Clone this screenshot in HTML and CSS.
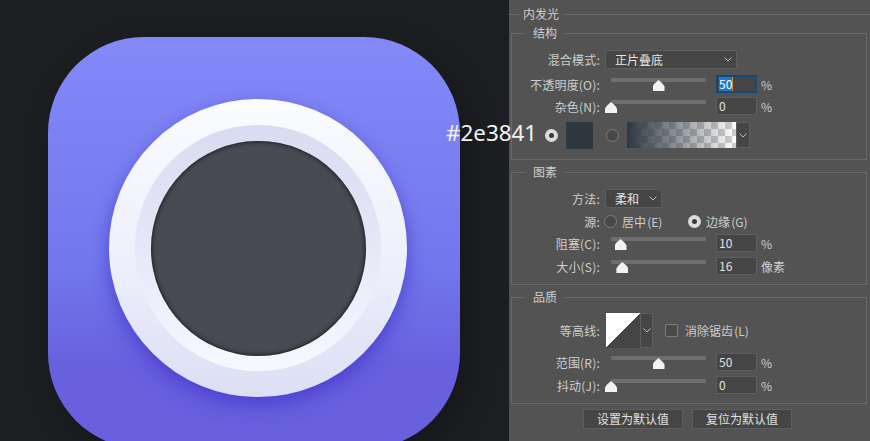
FILE: index.html
```html
<!DOCTYPE html>
<html lang="zh-CN">
<head>
  <meta charset="UTF-8">
  <title>内发光</title>
  <link rel="stylesheet" href="styles.css">
</head>
<body>
  <div class="art">
    <div class="icon">
      <div class="ring">
        <div class="ring-inner">
          <div class="hole"></div>
        </div>
      </div>
    </div>
  </div>

  <div class="panel">
    <div class="heading"><span>内发光</span></div>

    <div class="group">
      <div class="legend">结构</div>
      <div class="row">
        <div class="label">混合模式:</div>
        <div class="select select-wide">正片叠底
          <svg class="chevron" viewBox="0 0 8 5"><path d="M0.5 0.5 4 4 7.5 0.5"/></svg>
        </div>
      </div>
      <div class="row mt6">
        <div class="label">不透明度(O):</div>
        <div class="track"><i class="thumb" style="left:50%"></i></div>
        <div class="value active"><span class="selected">50</span><span class="caret"></span></div>
        <div class="unit">%</div>
      </div>
      <div class="row mt4">
        <div class="label">杂色(N):</div>
        <div class="track"><i class="thumb" style="left:0"></i></div>
        <div class="value">0</div>
        <div class="unit">%</div>
      </div>
      <div class="row colors">
        <i class="radio on"></i>
        <div class="swatch"></div>
        <i class="radio"></i>
        <div class="ramp"></div>
        <div class="drop drop-ramp">
          <svg class="chevron" viewBox="0 0 8 5"><path d="M0.5 0.5 4 4 7.5 0.5"/></svg>
        </div>
      </div>
    </div>

    <div class="group mt12">
      <div class="legend">图素</div>
      <div class="row">
        <div class="label">方法:</div>
        <div class="select select-small">柔和
          <svg class="chevron" viewBox="0 0 8 5"><path d="M0.5 0.5 4 4 7.5 0.5"/></svg>
        </div>
      </div>
      <div class="row mt4">
        <div class="label">源:</div>
        <div class="source first"><i class="radio"></i>居中 (E)</div>
        <div class="source"><i class="radio on"></i>边缘 (G)</div>
      </div>
      <div class="row mt4">
        <div class="label">阻塞(C):</div>
        <div class="track"><i class="thumb" style="left:10%"></i></div>
        <div class="value">10</div>
        <div class="unit">%</div>
      </div>
      <div class="row mt5">
        <div class="label">大小(S):</div>
        <div class="track"><i class="thumb" style="left:12%"></i></div>
        <div class="value">16</div>
        <div class="unit">像素</div>
      </div>
    </div>

    <div class="group mt12 quality">
      <div class="legend">品质</div>
      <div class="row">
        <div class="label">等高线:</div>
        <div class="contour"></div>
        <div class="drop drop-contour">
          <svg class="chevron" viewBox="0 0 8 5"><path d="M0.5 0.5 4 4 7.5 0.5"/></svg>
        </div>
        <i class="check"></i>
        <div class="check-text">消除锯齿 (L)</div>
      </div>
      <div class="row mt5">
        <div class="label">范围(R):</div>
        <div class="track"><i class="thumb" style="left:50%"></i></div>
        <div class="value">50</div>
        <div class="unit">%</div>
      </div>
      <div class="row mt5">
        <div class="label">抖动(J):</div>
        <div class="track"><i class="thumb" style="left:0"></i></div>
        <div class="value">0</div>
        <div class="unit">%</div>
      </div>
    </div>

    <div class="buttons">
      <button>设置为默认值</button>
      <button>复位为默认值</button>
    </div>
  </div>

  <div class="hex">#2e3841</div>
</body>
</html>
```

FILE: styles.css
```css
html, body {
  margin: 0;
  height: 100%;
}
body {
  display: flex;
  width: 870px;
  height: 441px;
  overflow: hidden;
  position: relative;
  font-family: "Noto Sans CJK SC", "Noto Sans", sans-serif;
  font-size: 12px;
  color: #cdcdcd;
}

/* artwork */
.art {
  width: 509px;
  height: 441px;
  box-sizing: border-box;
  padding: 37px 0 0 48px;
  background: #1d1e22;
  overflow: hidden;
  flex: none;
}
.icon {
  width: 412px;
  height: 412px;
  box-sizing: border-box;
  padding: 62px 0 0 61px;
  border-radius: 96px;
  background: linear-gradient(#8489f8, #7278ec 55%, #6860de 80%, #6860de);
  box-shadow: 8px 10px 30px rgba(0,0,0,0.25);
}
.ring {
  width: 298px;
  height: 298px;
  border-radius: 50%;
  display: flex;
  align-items: center;
  justify-content: center;
  background: linear-gradient(#fbfcff, #eceefb 60%, #dcdef4);
  box-shadow: 0 8px 18px rgba(70,60,205,0.85);
}
.ring-inner {
  width: 246px;
  height: 246px;
  border-radius: 50%;
  display: flex;
  align-items: center;
  justify-content: center;
  background: linear-gradient(#d9dbf0, #e6e8f8 50%, #f7f8ff);
}
.hole {
  width: 215px;
  height: 215px;
  border-radius: 50%;
  background: #4a4a53;
  box-shadow: inset 0 0 5px rgba(0,0,0,0.85);
}

/* panel */
.panel {
  flex: 1;
  background: #535353;
}
.heading {
  height: 29px;
  display: flex;
  align-items: center;
  gap: 4px;
  line-height: 27px;
}
.heading span {
  height: 27px;
  margin-top: -2px;
}
.heading::before, .heading::after {
  content: "";
  height: 1px;
  background: #696969;
}
.heading::before {
  width: 10px;
}
.heading::after {
  flex: 1;
}
.group {
  position: relative;
  margin: 4px 3px 0 2px;
  padding: 16px 0 10px;
  border: 1px solid #696969;
}
.mt12 {
  margin-top: 12px;
}
.group.mt12 {
  padding-bottom: 9px;
}
.group.quality {
  padding-top: 15px;
}
.legend {
  position: absolute;
  top: -10px;
  left: 13px;
  padding: 0 8px;
  line-height: 17px;
  background: #535353;
}
.row {
  display: flex;
  align-items: center;
}
.mt4 { margin-top: 4px; }
.mt5 { margin-top: 5px; }
.mt6 { margin-top: 6px; }

.label {
  width: 88px;
  flex: none;
  text-align: right;
  white-space: nowrap;
  letter-spacing: 0.2px;
}
.select {
  height: 19px;
  box-sizing: border-box;
  margin-left: 5px;
  padding-left: 9px;
  display: flex;
  align-items: center;
  justify-content: space-between;
  background: #454545;
  border: 1px solid #5e5e5e;
  border-radius: 2px;
  color: #e6e6e6;
  line-height: 17px;
}
.select-wide { width: 132px; }
.select-small { width: 57px; }
.chevron {
  width: 8px;
  height: 5px;
  margin-right: 4px;
  fill: none;
  stroke: #bdbdbd;
  stroke-width: 1;
}

/* sliders */
.track {
  position: relative;
  width: 95px;
  height: 4px;
  margin: 3px 10px 11px 11px;
  background: #6e6e6e;
  border-radius: 1px;
}
.thumb {
  position: absolute;
  top: 2px;
  width: 12px;
  height: 11px;
  margin-left: -6px;
  background: #f2f2f2;
  clip-path: polygon(50% 0, 85% 35%, 100% 60%, 100% 100%, 0 100%, 0 60%, 15% 35%);
}
.value {
  width: 41px;
  height: 18px;
  box-sizing: border-box;
  padding-left: 2px;
  background: #454545;
  border: 1px solid #5e5e5e;
  color: #e0e0e0;
  line-height: 16px;
  display: flex;
}
.value.active {
  border: 2px solid #0f4a80;
  padding-left: 1px;
  line-height: 14px;
}
.selected {
  background: #2277cc;
  color: #fff;
}
.caret {
  width: 1px;
  background: #d98a2b;
}
.unit {
  margin-left: 4px;
}

/* colour row */
.colors {
  margin-top: 7px;
  padding-left: 33px;
}
.radio {
  display: block;
  flex: none;
  width: 13px;
  height: 13px;
  box-sizing: border-box;
  border: 1px solid #7d7d7d;
  border-radius: 50%;
  background: #484848;
}
.radio.on {
  border: 4px solid #dcdcdc;
  background: #3a3a3a;
}
.swatch {
  width: 27px;
  height: 27px;
  margin: 0 13px 0 8px;
  background: #2e3841;
}
.ramp {
  width: 109px;
  height: 26px;
  margin-left: 8px;
  margin-bottom: 1px;
  background:
    linear-gradient(to right, #2e3841, rgba(46,56,65,0)),
    conic-gradient(#fff 25%, #cfcfcf 0 50%, #fff 0 75%, #cfcfcf 0) 0 0 / 14px 14px;
}
.drop {
  box-sizing: border-box;
  display: flex;
  align-items: center;
  justify-content: center;
  background: #454545;
  border: 1px solid #5e5e5e;
}
.drop .chevron {
  margin: 0;
}
.drop-ramp {
  width: 14px;
  height: 26px;
  margin-bottom: 1px;
}
.contour {
  width: 34px;
  height: 35px;
  margin-left: 6px;
  background: linear-gradient(to bottom right, #fff 50%, #454545 50%);
}
.drop-contour {
  width: 13px;
  height: 35px;
}

/* source radios */
.source {
  display: flex;
  align-items: center;
  gap: 5px;
  height: 18px;
  width: 84px;
  word-spacing: -1.5px;
}
.source.first {
  margin-left: 4px;
}

/* anti alias check */
.check {
  display: block;
  width: 13px;
  height: 13px;
  box-sizing: border-box;
  margin-left: 12px;
  border: 1px solid #7d7d7d;
  border-radius: 2px;
  background: #4a4a4a;
}
.check-text {
  margin-left: 7px;
  word-spacing: -1.5px;
}

/* footer buttons */
.buttons {
  display: flex;
  gap: 9px;
  margin-top: 5px;
  padding-left: 74px;
}
button {
  width: 100px;
  height: 20px;
  padding: 0;
  font: inherit;
  line-height: 18px;
  color: #e0e0e0;
  background: #454545;
  border: 1px solid #5e5e5e;
}

/* label over the screenshot */
.hex {
  position: absolute;
  left: 446px;
  top: 118px;
  font-family: "Noto Sans", sans-serif;
  font-size: 22.4px;
  line-height: 30px;
  color: #f2f2f2;
}
```
